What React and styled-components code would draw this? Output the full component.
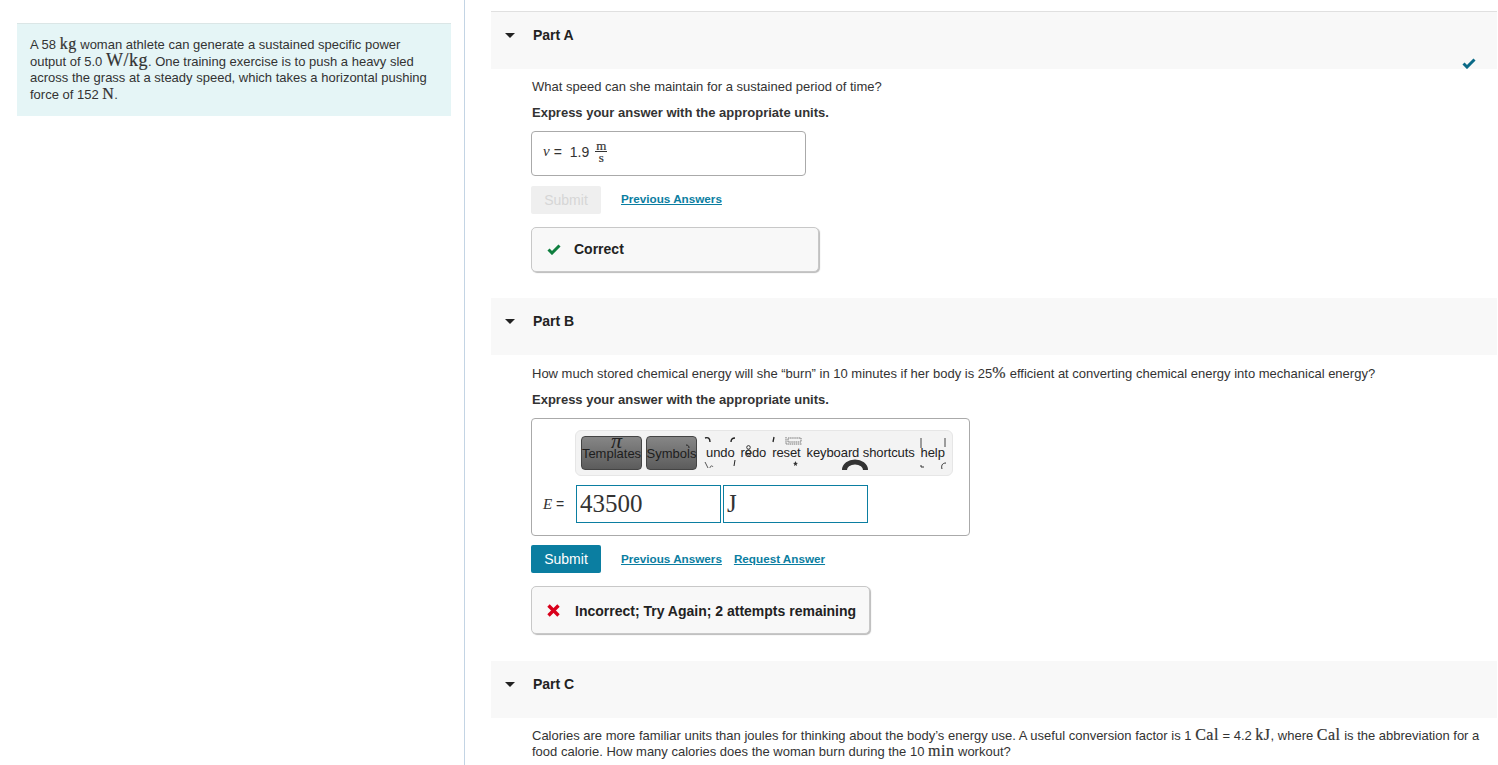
import React from "react";
import styled, { createGlobalStyle } from "styled-components";

const Global = createGlobalStyle`
  html, body { margin: 0; padding: 0; background: #fff; }
  body { font-family: "Liberation Sans", Arial, sans-serif; font-size: 13px; color: #333; }
  #root { height: 765px; overflow: hidden; }
`;

const Page = styled.div`
  display: flex;
  width: 1498px;
  height: 765px;
  overflow: hidden;
`;
const LeftColumn = styled.aside`
  box-sizing: border-box;
  width: 465px;
  flex: none;
  padding: 23px 13px 0 17px;
  border-right: 1px solid #c3d4e4;
`;
const Intro = styled.div`
  box-sizing: border-box;
  height: 93px;
  padding: 13px 13px 0 13px;
  background: #e5f5f6;
  border-top: 1px solid #dbe6e6;
  line-height: 16.7px;
  font-size: 13px;
  color: #333;
`;
const RightColumn = styled.main`
  flex: 1;
  min-width: 0;
  padding: 11px 1px 0 26px;
`;
const PartHeader = styled.div`
  box-sizing: border-box;
  height: ${p => p.$h || 57}px;
  background: #f8f8f8;
  ${p => p.$top && "border-top: 1px solid #e0e0e0;"}
  display: flex;
  align-items: flex-start;
  padding: 15px 0 0 14px;
  position: relative;
`;
const Caret = styled.span`
  width: 0;
  height: 0;
  margin: 6px 18px 0 0;
  border-left: 5.5px solid transparent;
  border-right: 5.5px solid transparent;
  border-top: 5px solid #222;
`;
const PartTitle = styled.span`
  font-weight: 700;
  font-size: 14px;
  line-height: 16px;
  color: #222;
`;
const DoneMark = styled.svg`
  position: absolute;
  right: 21px;
  bottom: 0;
  width: 14px;
  height: 11px;
`;
const PartBody = styled.section`
  padding-left: 40px;
`;
const Text = styled.p`
  margin: ${p => p.$mt ?? 10}px 0 0 1px;
  font-size: 13px;
  line-height: 16px;
  color: #333;
  ${p => p.$bold && "font-weight: 700;"}
`;
const Mr = styled.span`
  font-family: "Liberation Serif", serif;
  font-size: ${p => p.$size || 16}px;
  line-height: 0;
  letter-spacing: 0.5px;
  -webkit-text-stroke: 0.2px currentColor;
`;
const Mi = styled.i`
  font-family: "Liberation Serif", serif;
  font-size: 15px;
`;
const AnswerBox = styled.div`
  box-sizing: border-box;
  margin-top: 10px;
  width: 275px;
  height: 45px;
  border: 1px solid #aaa;
  border-radius: 4px;
  display: flex;
  align-items: center;
  padding: 0 0 4px 11px;
  font-size: 14px;
  gap: 4px;
`;
const Fraction = styled.span`
  display: inline-flex;
  flex-direction: column;
  align-items: center;
  font-family: "Liberation Serif", serif;
  font-size: 13px;
  line-height: 11px;
  margin-left: 2px;
  -webkit-text-stroke: 0.2px currentColor;
`;
const FracTop = styled.span`
  border-bottom: 1px solid #333;
  padding: 0 1px 1px;
  line-height: 9px;
`;
const ActionRow = styled.div`
  display: flex;
  align-items: flex-start;
  margin-top: ${p => p.$mt ?? 10}px;
  height: 28px;
`;
const SubmitButton = styled.button`
  width: 70px;
  height: 28px;
  border: 0;
  border-radius: 2px;
  padding: 0;
  font: 14px "Liberation Sans", Arial, sans-serif;
  background: ${p => (p.disabled ? "#efefef" : "#0b7ea1")};
  color: ${p => (p.disabled ? "#d6d6d6" : "#fff")};
  margin-right: 20px;
`;
const ActionLink = styled.a`
  font-size: 11.7px;
  font-weight: 700;
  line-height: 14px;
  margin: ${p => p.$mt ?? 6}px 12px 0 0;
  color: #0b7ea1;
  text-decoration: underline;
`;
const Feedback = styled.div`
  box-sizing: border-box;
  margin-top: 13px;
  width: ${p => p.$w}px;
  height: ${p => p.$h}px;
  background: #f8f8f8;
  border: 1px solid #c8c8c8;
  border-radius: 5px;
  box-shadow: 1px 1px 1px #bbb;
  display: flex;
  align-items: center;
  padding: ${p => p.$pt || 0}px 0 ${p => p.$pb || 0}px 15px;
  gap: ${p => p.$gap}px;
  font-size: 14px;
  font-weight: 700;
  color: #222;
`;
const EditorBox = styled.div`
  box-sizing: border-box;
  margin-top: 10px;
  width: 439px;
  height: 118px;
  border: 1px solid #aaa;
  border-radius: 4px;
  padding: 11px 0 0 43px;
`;
const Toolbar = styled.div`
  box-sizing: border-box;
  width: 378px;
  height: 46px;
  background: #f3f3f3;
  border: 1px solid #e6e6e6;
  border-radius: 6px;
  display: flex;
  align-items: center;
  padding-left: 5px;
  color: #222;
  font-size: 13px;
`;
const ToolButton = styled.span`
  box-sizing: border-box;
  position: relative;
  width: ${p => p.$w}px;
  height: 34px;
  margin-right: 4px;
  border: 1px solid #444;
  border-radius: 4px;
  background: linear-gradient(#868686, #5c5c5c);
  display: flex;
  align-items: center;
  justify-content: center;
  white-space: nowrap;
  color: #1d1d1d;
  font-size: 13px;
`;
const ToolLabel = styled.span`
  position: relative;
  margin-left: ${p => p.$ml}px;
  white-space: nowrap;
  line-height: 16px;
  letter-spacing: -0.1px;
`;
const Pi = styled.span`
  position: absolute;
  left: 29px;
  top: -5px;
  font: italic 22px "Liberation Serif", serif;
  line-height: 18px;
  color: #222;
`;
const Scrap = styled.svg`
  position: absolute;
  left: ${p => p.$x}px;
  top: ${p => p.$y}px;
  overflow: visible;
`;
const InputRow = styled.div`
  display: flex;
  align-items: center;
  margin: 9px 0 0 -32px;
`;
const EqLabel = styled.span`
  font-size: 14px;
  width: 33px;
  flex: none;
  white-space: nowrap;
`;
const MathInput = styled.div`
  box-sizing: border-box;
  width: 145px;
  height: 38px;
  border: 1px solid #0b7ea1;
  margin-right: 2px;
  padding-left: 3px;
  font-family: "Liberation Serif", serif;
  font-size: 25px;
  line-height: 35px;
  color: #333;
`;
const PartSpacer = styled.div`
  height: ${p => p.$h}px;
`;

function Editor() {
  return (
    <EditorBox>
      <Toolbar>
        <ToolButton $w={61}>Templates<Pi>π</Pi></ToolButton>
        <ToolButton $w={51}>
          Symbols
          <Scrap $x={38} $y={7} width="6" height="10" viewBox="0 0 6 10"><path d="M1 1c2 0 3 1 3 3" fill="none" stroke="#222" strokeWidth="1" /></Scrap>
        </ToolButton>
        <ToolLabel $ml={5}>
          undo
          <Scrap $x={-1} $y={-8} width="6" height="6" viewBox="0 0 6 6"><path d="M0 1c3-1 5 0 5 4" fill="none" stroke="#222" strokeWidth="1.4" /></Scrap>
          <Scrap $x={-1} $y={17} width="8" height="7" viewBox="0 0 8 7"><path d="M0 0l3 6M5 6c0-2 2-3 3-1" fill="none" stroke="#555" strokeWidth="1" /></Scrap>
          <Scrap $x={24} $y={-8} width="5" height="6" viewBox="0 0 5 6"><path d="M1 5c0-3 1-4 4-4" fill="none" stroke="#222" strokeWidth="1.4" /></Scrap>
          <Scrap $x={27} $y={15} width="3" height="6" viewBox="0 0 3 6"><path d="M2 0L1 6" stroke="#222" strokeWidth="1" /></Scrap>
        </ToolLabel>
        <ToolLabel $ml={6}>
          redo
          <Scrap $x={4} $y={0} width="7" height="12" viewBox="0 0 7 12"><circle cx="3.5" cy="2.4" r="1.8" fill="none" stroke="#333" /><circle cx="3.5" cy="7.5" r="2.6" fill="none" stroke="#333" /></Scrap>
        </ToolLabel>
        <ToolLabel $ml={6}>
          reset
          <Scrap $x={0} $y={-8} width="4" height="6" viewBox="0 0 4 6"><path d="M2 0L1 5" stroke="#222" strokeWidth="1.3" /></Scrap>
          <Scrap $x={14} $y={-8} width="16" height="8" viewBox="0 0 16 8"><path d="M0 0v7h16M2 1h13v4H2z" fill="none" stroke="#777" strokeWidth="1" strokeDasharray="1.5 .6" /></Scrap>
          <Scrap $x={21} $y={16} width="5" height="5" viewBox="0 0 5 5"><path d="M2.5 0l.7 1.8L5 2l-1.4 1.1L4 5 2.5 4 1 5l.4-1.9L0 2l1.8-.2z" fill="#333" /></Scrap>
        </ToolLabel>
        <ToolLabel $ml={6}>
          keyboard shortcuts
          <Scrap $x={35} $y={15} width="26" height="10" viewBox="0 0 26 10"><path d="M2.5 10a10.5 8 0 0 1 21 0" fill="none" stroke="#333" strokeWidth="5" /></Scrap>
        </ToolLabel>
        <ToolLabel $ml={6}>
          help
          <Scrap $x={-1} $y={-7} width="2" height="10" viewBox="0 0 2 10"><path d="M1 0v10" stroke="#444" strokeWidth="1" /></Scrap>
          <Scrap $x={23} $y={-7} width="2" height="9" viewBox="0 0 2 9"><path d="M1 0v9" stroke="#444" strokeWidth="1" /></Scrap>
          <Scrap $x={0} $y={20} width="4" height="3" viewBox="0 0 4 3"><path d="M0 0v2h3" fill="none" stroke="#333" strokeWidth="1" /></Scrap>
          <Scrap $x={20} $y={17} width="5" height="7" viewBox="0 0 5 7"><path d="M1 7c-1-3 0-6 4-6" fill="none" stroke="#333" strokeWidth="1" /></Scrap>
        </ToolLabel>
      </Toolbar>
      <InputRow>
        <EqLabel><Mi>E</Mi> =</EqLabel>
        <MathInput>43500</MathInput>
        <MathInput>J</MathInput>
      </InputRow>
    </EditorBox>
  );
}

export default function App() {
  return (
    <Page>
      <Global />
      <LeftColumn>
        <Intro>
          A 58 <Mr>kg</Mr> woman athlete can generate a sustained specific power output of 5.0 <Mr $size={18}>W/kg</Mr>. One training exercise is to push a heavy sled across the grass at a steady speed, which takes a horizontal pushing force of 152 <Mr>N</Mr>.
        </Intro>
      </LeftColumn>
      <RightColumn>
        <PartHeader $top $h={58}>
          <Caret />
          <PartTitle>Part A</PartTitle>
          <DoneMark viewBox="0 0 14 11"><path d="M1.5 5.5L5 9l7.5-7.5" fill="none" stroke="#0b6a87" strokeWidth="3" /></DoneMark>
        </PartHeader>
        <PartBody>
          <Text $mt={10}>What speed can she maintain for a sustained period of time?</Text>
          <Text $bold>Express your answer with the appropriate units.</Text>
          <AnswerBox>
            <Mi>v</Mi> =
            <span>&nbsp;1.9</span>
            <Fraction><FracTop>m</FracTop><span>s</span></Fraction>
          </AnswerBox>
          <ActionRow>
            <SubmitButton disabled>Submit</SubmitButton>
            <ActionLink>Previous Answers</ActionLink>
          </ActionRow>
          <Feedback $w={288} $h={45} $gap={13} $pb={1}>
            <svg width="14" height="11" viewBox="0 0 14 11"><path d="M1.5 5.5L5 9l7.5-7.5" fill="none" stroke="#0f7f3f" strokeWidth="3" /></svg>
            Correct
          </Feedback>
        </PartBody>
        <PartSpacer $h={26} />
        <PartHeader $h={57}>
          <Caret />
          <PartTitle>Part B</PartTitle>
        </PartHeader>
        <PartBody>
          <Text $mt={11}>How much stored chemical energy will she “burn” in 10 minutes if her body is 25<Mr>%</Mr> efficient at converting chemical energy into mechanical energy?</Text>
          <Text $bold>Express your answer with the appropriate units.</Text>
          <Editor />
          <ActionRow $mt={9}>
            <SubmitButton>Submit</SubmitButton>
            <ActionLink $mt={7}>Previous Answers</ActionLink>
            <ActionLink $mt={7}>Request Answer</ActionLink>
          </ActionRow>
          <Feedback $w={339} $h={48} $gap={15} $pt={1}>
            <svg width="13" height="13" viewBox="0 0 13 13"><path d="M1.5 1.5l10 10M11.5 1.5l-10 10" fill="none" stroke="#d9001b" strokeWidth="3.4" /></svg>
            Incorrect; Try Again; 2 attempts remaining
          </Feedback>
        </PartBody>
        <PartSpacer $h={27} />
        <PartHeader $h={57}>
          <Caret />
          <PartTitle>Part C</PartTitle>
        </PartHeader>
        <PartBody>
          <Text $mt={10}>Calories are more familiar units than joules for thinking about the body’s energy use. A useful conversion factor is 1 <Mr>Cal</Mr> = 4.2 <Mr>kJ</Mr>, where <Mr>Cal</Mr> is the abbreviation for a food calorie. How many calories does the woman burn during the 10 <Mr>min</Mr> workout?</Text>
        </PartBody>
      </RightColumn>
    </Page>
  );
}
